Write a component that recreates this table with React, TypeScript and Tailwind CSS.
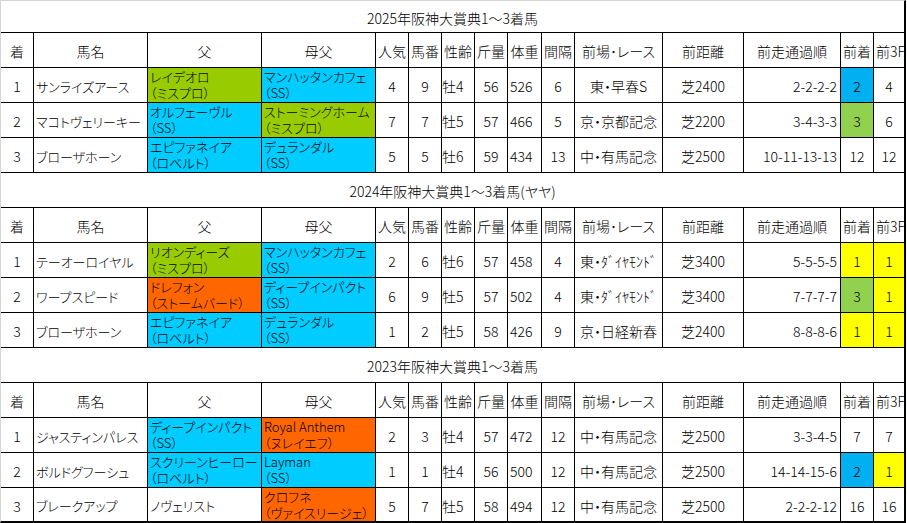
import type { ReactNode } from "react";

// 阪神大賞典 1〜3着馬 — spreadsheet-style table, three years stacked.

type Tone = "g" | "b" | "o" | "y" | "lg" | "cb" | "";

const BG: Record<string, string> = {
  g: "bg-[#99cc00]",
  b: "bg-[#00ccff]",
  o: "bg-[#ff6600]",
  y: "bg-[#ffff00]",
  lg: "bg-[#92d050]",
  cb: "bg-[#00b0f0]",
  "": "",
};

type Horse = {
  pos: string;
  name: string;
  sire: [string, string?, Tone?];
  bms: [string, string?, Tone?];
  pop: string;
  num: string;
  sexAge: string;
  kin: string;
  weight: string;
  gap: string;
  race: string;
  dist: string;
  pass: string;
  prev: [string, Tone?];
  prev3f: [string, Tone?];
};

const SECTIONS: { title: string; rows: Horse[] }[] = [
  {
    title: "2025年阪神大賞典1～3着馬",
    rows: [
      { pos: "1", name: "サンライズアース", sire: ["レイデオロ", "（ミスプロ）", "g"], bms: ["マンハッタンカフェ", "（SS）", "b"], pop: "4", num: "9", sexAge: "牡4", kin: "56", weight: "526", gap: "6", race: "東・早春S", dist: "芝2400", pass: "2-2-2-2", prev: ["2", "cb"], prev3f: ["4"] },
      { pos: "2", name: "マコトヴェリーキー", sire: ["オルフェーヴル", "（SS）", "b"], bms: ["ストーミングホーム", "（ミスプロ）", "g"], pop: "7", num: "7", sexAge: "牡5", kin: "57", weight: "466", gap: "5", race: "京・京都記念", dist: "芝2200", pass: "3-4-3-3", prev: ["3", "lg"], prev3f: ["6"] },
      { pos: "3", name: "ブローザホーン", sire: ["エピファネイア", "（ロベルト）", "b"], bms: ["デュランダル", "（SS）", "b"], pop: "5", num: "5", sexAge: "牡6", kin: "59", weight: "434", gap: "13", race: "中・有馬記念", dist: "芝2500", pass: "10-11-13-13", prev: ["12"], prev3f: ["12"] },
    ],
  },
  {
    title: "2024年阪神大賞典1～3着馬(ヤヤ)",
    rows: [
      { pos: "1", name: "テーオーロイヤル", sire: ["リオンディーズ", "（ミスプロ）", "g"], bms: ["マンハッタンカフェ", "（SS）", "b"], pop: "2", num: "6", sexAge: "牡6", kin: "57", weight: "458", gap: "4", race: "東・ﾀﾞｲﾔﾓﾝﾄﾞ", dist: "芝3400", pass: "5-5-5-5", prev: ["1", "y"], prev3f: ["1", "y"] },
      { pos: "2", name: "ワープスピード", sire: ["ドレフォン", "（ストームバード）", "o"], bms: ["ディープインパクト", "（SS）", "b"], pop: "6", num: "9", sexAge: "牡5", kin: "57", weight: "502", gap: "4", race: "東・ﾀﾞｲﾔﾓﾝﾄﾞ", dist: "芝3400", pass: "7-7-7-7", prev: ["3", "lg"], prev3f: ["1", "y"] },
      { pos: "3", name: "ブローザホーン", sire: ["エピファネイア", "（ロベルト）", "b"], bms: ["デュランダル", "（SS）", "b"], pop: "1", num: "2", sexAge: "牡5", kin: "58", weight: "426", gap: "9", race: "京・日経新春", dist: "芝2400", pass: "8-8-8-6", prev: ["1", "y"], prev3f: ["1", "y"] },
    ],
  },
  {
    title: "2023年阪神大賞典1～3着馬",
    rows: [
      { pos: "1", name: "ジャスティンパレス", sire: ["ディープインパクト", "（SS）", "b"], bms: ["Royal Anthem", "（ヌレイエフ）", "o"], pop: "2", num: "3", sexAge: "牡4", kin: "57", weight: "472", gap: "12", race: "中・有馬記念", dist: "芝2500", pass: "3-3-4-5", prev: ["7"], prev3f: ["7"] },
      { pos: "2", name: "ボルドグフーシュ", sire: ["スクリーンヒーロー", "（ロベルト）", "b"], bms: ["Layman", "（SS）", "b"], pop: "1", num: "1", sexAge: "牡4", kin: "56", weight: "500", gap: "12", race: "中・有馬記念", dist: "芝2500", pass: "14-14-15-6", prev: ["2", "cb"], prev3f: ["1", "y"] },
      { pos: "3", name: "ブレークアップ", sire: ["ノヴェリスト"], bms: ["クロフネ", "（ヴァイスリージェ）", "o"], pop: "5", num: "7", sexAge: "牡5", kin: "58", weight: "494", gap: "12", race: "中・有馬記念", dist: "芝2500", pass: "2-2-2-12", prev: ["16"], prev3f: ["16"] },
    ],
  },
];

const HEADERS = ["着", "馬名", "父", "母父", "人気", "馬番", "性齢", "斤量", "体重", "間隔", "前場･レース", "前距離", "前走通過順", "前着", "前3F"];

const GRID =
  "grid grid-cols-[33px_114px_114px_114px_33px_33px_33px_33px_34px_33px_88px_81px_97px_33px_30px]";

function Cell({
  children,
  align = "center",
  tone = "",
  last = false,
  className = "",
}: {
  children: ReactNode;
  align?: "center" | "left" | "right";
  tone?: Tone;
  last?: boolean;
  className?: string;
}) {
  const justify =
    align === "left" ? "justify-start pl-[2px]" : align === "right" ? "justify-end pr-[3px]" : "justify-center";
  return (
    <div
      className={`flex items-center overflow-hidden whitespace-nowrap pt-[3px] ${justify} ${BG[tone]} ${last ? "" : "border-r border-black"} ${className}`}
    >
      {children}
    </div>
  );
}

function Pedigree({ data }: { data: [string, string?, Tone?] }) {
  const [top, sub, tone = ""] = data;
  if (!sub) {
    return (
      <Cell align="left" className="text-[13px]">
        {top}
      </Cell>
    );
  }
  // two-line cell: sire name over its line in parentheses
  return (
    <div
      className={`flex flex-col justify-center whitespace-nowrap border-r border-black px-[2px] text-[13px] leading-[16px] ${BG[tone]}`}
    >
      <span>{top}</span>
      <span>{sub}</span>
    </div>
  );
}

function Row({ h, last }: { h: Horse; last: boolean }) {
  return (
    <div className={`${GRID} ${last ? "h-[34px]" : "h-[35px]"} border-t border-black`}>
      <Cell>{h.pos}</Cell>
      <Cell align="left" className="text-[13px]">
        {h.name}
      </Cell>
      <Pedigree data={h.sire} />
      <Pedigree data={h.bms} />
      <Cell>{h.pop}</Cell>
      <Cell>{h.num}</Cell>
      <Cell align="left" className="!pl-0">
        {h.sexAge}
      </Cell>
      <Cell>{h.kin}</Cell>
      <Cell align="left">{h.weight}</Cell>
      <Cell>{h.gap}</Cell>
      <Cell>{h.race}</Cell>
      <Cell>{h.dist}</Cell>
      <Cell align="right">{h.pass}</Cell>
      <Cell tone={h.prev[1] ?? ""}>{h.prev[0]}</Cell>
      <Cell tone={h.prev3f[1] ?? ""} last>
        {h.prev3f[0]}
      </Cell>
    </div>
  );
}

export default function App() {
  return (
    <div className="h-[523px] w-[907px] overflow-hidden bg-white">
      <div className="w-[906px] border-l border-t border-r-2 border-b-2 border-l-[#d4d4d4] border-t-[#d4d4d4] border-r-black border-b-black bg-white font-['Noto_Sans_CJK_JP','Noto_Sans_CJK_SC',sans-serif] text-[14px] font-light text-black [font-feature-settings:'palt']">
        {SECTIONS.map((s, si) => (
          <div key={s.title}>
            <div
              className={`flex items-center justify-center pt-[3px] ${si === 0 ? "h-[31px]" : "h-[35px] border-t border-black"}`}
            >
              {s.title}
            </div>
            <div className={`${GRID} h-[35px] border-t border-black`}>
              {HEADERS.map((t, i) => (
                <Cell key={t} last={i === HEADERS.length - 1} align={i === HEADERS.length - 1 ? "left" : "center"}>
                  {t}
                </Cell>
              ))}
            </div>
            {s.rows.map((h, ri) => (
              <Row key={h.name + ri} h={h} last={si === SECTIONS.length - 1 && ri === s.rows.length - 1} />
            ))}
          </div>
        ))}
      </div>
    </div>
  );
}
